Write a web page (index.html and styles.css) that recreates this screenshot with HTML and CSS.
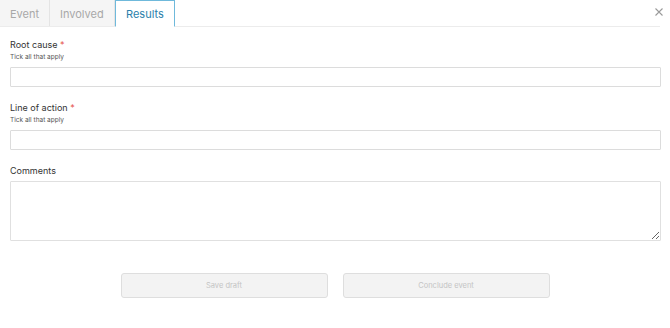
FILE: index.html
```html
<!DOCTYPE html>
<html lang="en">
<head>
    <meta charset="UTF-8">
    <meta name="viewport" content="width=device-width, initial-scale=1.0">
    <title>Event results</title>
    <link rel="stylesheet" href="styles.css">
</head>
<body>
    <!-- Tabs -->
    <div class="tab-bar">
        <div class="tab">Event</div>
        <div class="tab">Involved</div>
        <div class="tab active">Results</div>
        <button class="close" aria-label="Close">
            <svg width="8" height="8" viewBox="0 0 8 8">
                <path d="M0.5 0.5 L7.5 7.5 M7.5 0.5 L0.5 7.5" stroke="#9a9a9a" stroke-width="1.1" fill="none"/>
            </svg>
        </button>
    </div>

    <div class="form">
        <div class="field">
            <label>Root cause <span class="req">*</span></label>
            <div class="hint">Tick all that apply</div>
            <div class="select-box"></div>
        </div>

        <div class="field">
            <label>Line of action <span class="req">*</span></label>
            <div class="hint">Tick all that apply</div>
            <div class="select-box"></div>
        </div>

        <div class="field comments">
            <label>Comments</label>
            <textarea class="comment-box"></textarea>
        </div>

        <div class="actions">
            <button class="btn" disabled>Save draft</button>
            <button class="btn" disabled>Conclude event</button>
        </div>
    </div>
</body>
</html>
```

FILE: styles.css
```css
body {
    margin: 0;
    font-family: Inter, "Noto Sans", sans-serif;
    background-color: #ffffff;
    color: #333333;
}
/* Tabs */
.tab-bar {
    display: flex;
    height: 26px;
    margin-right: 10px;
    border-bottom: 1px solid #ececec;
    position: relative;
}
.tab {
    display: flex;
    align-items: center;
    padding: 1px 10px 0;
    font-size: 11px;
    color: #a8a8a8;
    background-color: #f5f5f5;
    border-right: 1px solid #e4e4e4;
}
.tab:first-child {
    width: 29px;
}
.tab:nth-child(2) {
    width: 44px;
}
.tab.active {
    width: 38px;
    color: #2b7fab;
    background-color: #ffffff;
    border: 1px solid #6fb9db;
    border-bottom-color: #ffffff;
    margin-bottom: -1px;
}
.close {
    position: absolute;
    right: -3px;
    top: 8px;
    border: none;
    background: none;
    padding: 0;
    width: 8px;
    height: 8px;
    cursor: pointer;
}
.close svg {
    display: block;
}
/* Form */
.form {
    padding: 12px 9px 0 10px;
}
.field {
    margin-bottom: 15px;
}
.field label {
    display: block;
    font-size: 9px;
    line-height: 12px;
    color: #333333;
}
.req {
    color: #e5534b;
}
.hint {
    font-size: 6.5px;
    line-height: 12px;
    color: #555555;
}
.select-box {
    margin-top: 4px;
    height: 18px;
    border: 1px solid #dcdcdc;
    border-radius: 1px;
}
.comments label {
    margin-bottom: 4px;
}
.comment-box {
    display: block;
    box-sizing: border-box;
    width: 100%;
    height: 60px;
    margin: 0;
    border: 1px solid #e0e0e0;
    border-radius: 1px;
    resize: vertical;
    font-family: inherit;
}
.actions {
    display: flex;
    justify-content: center;
    gap: 15px;
    margin-top: 32px;
    padding-right: 1px;
}
.btn {
    width: 207px;
    height: 25px;
    font-family: inherit;
    font-size: 7.5px;
    color: #c4c4c4;
    background-color: #f3f3f3;
    border: 1px solid #dedede;
    border-radius: 3px;
}
```
